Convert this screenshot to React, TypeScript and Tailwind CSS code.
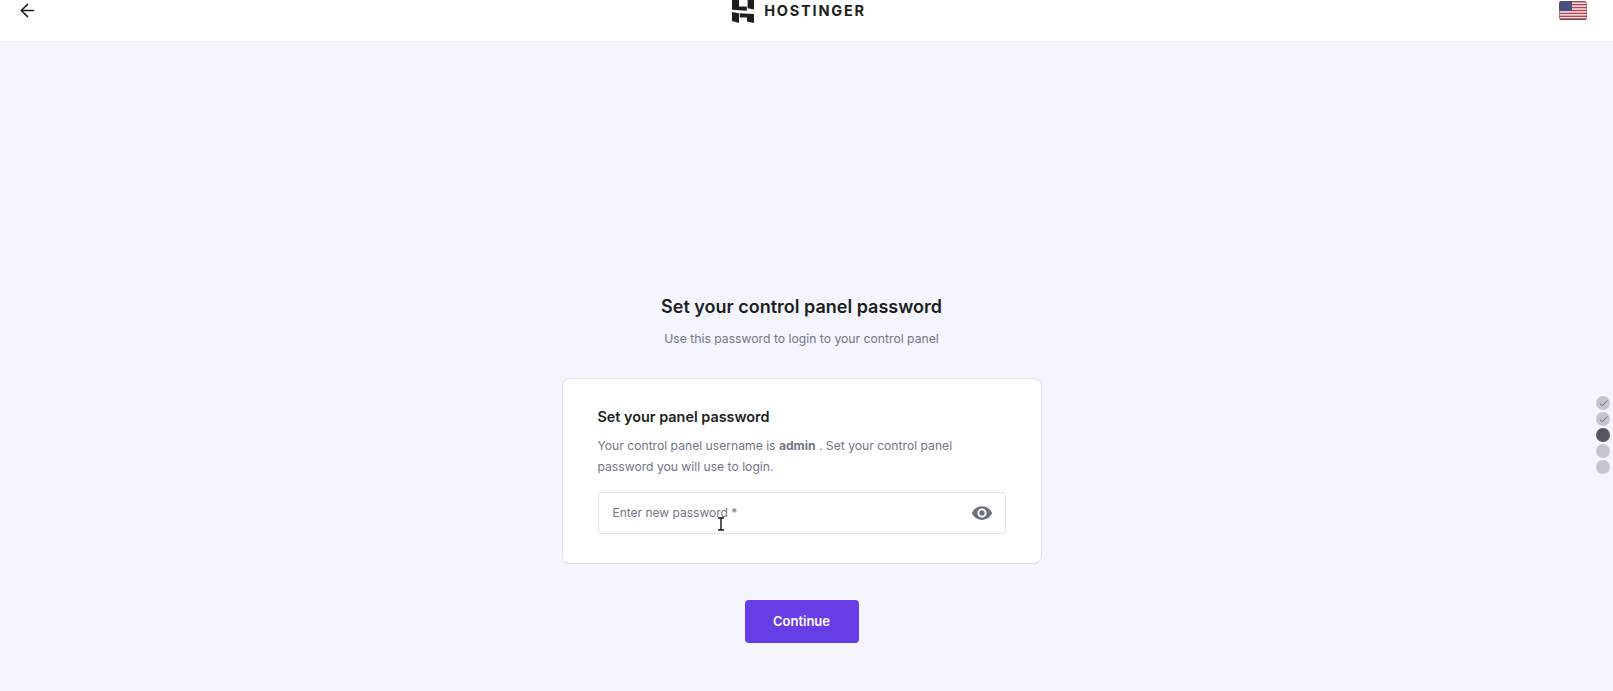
import { ArrowLeft, Check } from 'lucide-react'

const FONT = 'font-["Inter","Liberation_Sans",sans-serif]'

function Logo() {
  return (
    <div className="flex items-center gap-[10px] h-[23px]">
      <svg width="22" height="23" viewBox="0 0 22 23" fill="#1d1e20">
        <path d="M0 0H7V6.5H14.8V10.8L0 9.8Z" />
        <path d="M15.6 0H22V9.6L15.6 8.2Z" />
        <path d="M0 12L7 13.2V23L0 21Z" />
        <path d="M7.8 13.2L22 14V23L15 21.5V17.5H7.8Z" />
      </svg>
      <span className="text-[14.5px] leading-none font-bold tracking-[1.8px] text-[#1d1e20] -mt-[1px]">HOSTINGER</span>
    </div>
  )
}

function Flag() {
  const stripes = [0, 1, 2, 3, 4, 5, 6]
  return (
    <svg width="28" height="19" viewBox="0 0 28 19">
      <defs>
        <clipPath id="flag-clip">
          <rect x="0" y="0" width="28" height="19" rx="3" />
        </clipPath>
      </defs>
      <g clipPath="url(#flag-clip)">
        <rect width="28" height="19" fill="#f6eef0" />
        {stripes.map((i) => (
          <rect key={i} x="0" y={i * 2.92} width="28" height="1.46" fill="#b5434f" />
        ))}
        <rect width="13" height="10" fill="#4a4d80" />
        <rect x="0" y="17.6" width="28" height="1.4" fill="#8f3040" />
      </g>
      <rect x="0.4" y="0.4" width="27.2" height="18.2" rx="3" fill="none" stroke="#6b5060" strokeOpacity="0.6" strokeWidth="0.8" />
    </svg>
  )
}

function Steps() {
  return (
    <div className="absolute right-[3px] top-[396px] flex flex-col gap-[2px]">
      {[0, 1, 2, 3, 4].map((i) => (
        <div
          key={i}
          className={
            i === 2
              ? 'w-[14px] h-[14px] rounded-full bg-[#55565e]'
              : 'w-[14px] h-[14px] rounded-full bg-[#c4c5d0] flex items-center justify-center'
          }
        >
          {i < 2 && <Check className="w-[11px] h-[11px] text-[#55565e]" strokeWidth={1.8} />}
        </div>
      ))}
    </div>
  )
}

export default function App() {
  return (
    <div className={`relative h-screen overflow-hidden bg-[#f4f5ff] ${FONT}`}>
      <header className="h-[42px] bg-white border-b border-[#eeeef4] flex items-start justify-between pl-[17px] pr-[26px]">
        <ArrowLeft className="w-[21px] h-[21px] mt-0 text-[#1d1e20]" strokeWidth={1.8} />
        <div className="ml-[1px]">
          <Logo />
        </div>
        <div className="mt-[1px]">
          <Flag />
        </div>
      </header>

      <main className="flex flex-col items-center pt-[254px] pr-[10px]">
        <h1 className="text-[18px] leading-[22px] font-semibold text-[#1d1e20]">Set your control panel password</h1>
        <p className="mt-[11px] text-[12.2px] leading-[20px] text-[#727586]">Use this password to login to your control panel</p>

        <section className="mt-[29px] w-[480px] h-[186px] bg-white border border-[#e2e2ea] border-b-[#d8d8de] rounded-[8px] pt-[28px] px-[35px]">
          <h2 className="text-[14.4px] leading-[20px] font-semibold text-[#1d1e20]">Set your panel password</h2>
          <p className="mt-[8px] text-[12.15px] leading-[21px] text-[#727586]">
            Your control panel username is <b className="font-bold">admin</b> . Set your control panel
            <br />
            password you will use to login.
          </p>
          <div className="mt-[15px] h-[42px] border border-[#e2e2ea] rounded-[4px] flex items-center justify-between pl-[14px] pr-[12px]">
            <span className="text-[12px] text-[#727586]">Enter new password *</span>
            <svg width="22" height="22" viewBox="0 0 24 24" fill="#6d7081">
              <path d="M12 4.5C7 4.5 2.73 7.61 1 12c1.73 4.39 6 7.5 11 7.5s9.27-3.11 11-7.5c-1.73-4.39-6-7.5-11-7.5zM12 17c-2.76 0-5-2.24-5-5s2.24-5 5-5 5 2.24 5 5-2.24 5-5 5zm0-8c-1.66 0-3 1.34-3 3s1.34 3 3 3 3-1.34 3-3-1.34-3-3-3z" />
            </svg>
          </div>
        </section>

        <button className="mt-[36px] w-[114px] h-[43px] rounded-[4px] bg-[#673de6] text-white text-[13px] font-semibold">
          Continue
        </button>
      </main>

      <Steps />

      {/* mouse cursor sitting over the field */}
      <svg className="absolute left-[716px] top-[517px]" width="10" height="14" viewBox="0 0 10 14" fill="none" stroke="#111" strokeWidth="1.4">
        <path d="M2 1h6M2 13h6M5 1v12" />
      </svg>
    </div>
  )
}
